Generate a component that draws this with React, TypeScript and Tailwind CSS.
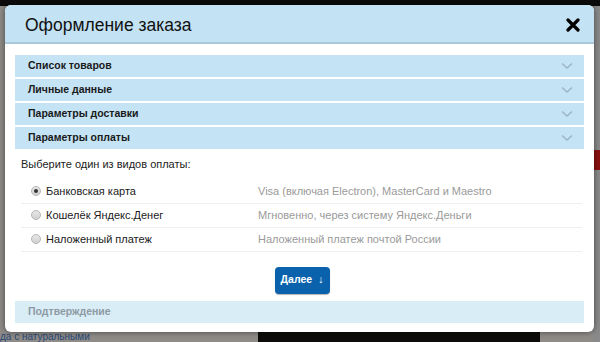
const sections = ['Список товаров', 'Личные данные', 'Параметры доставки', 'Параметры оплаты']

const payments = [
  { name: 'Банковская карта', note: 'Visa (включая Electron), MasterCard и Maestro', checked: true },
  { name: 'Кошелёк Яндекс.Денег', note: 'Мгновенно, через систему Яндекс.Деньги', checked: false },
  { name: 'Наложенный платеж', note: 'Наложенный платеж почтой России', checked: false },
]

function Radio({ checked }: { checked: boolean }) {
  return (
    <span className="w-[10px] h-[10px] rounded-full border border-[#b5b5b5] bg-gradient-to-b from-[#e8e8e8] to-[#d0d0d0] flex items-center justify-center">
      {checked && <span className="w-[4px] h-[4px] rounded-full bg-[#333]" />}
    </span>
  )
}

function Chevron() {
  return (
    <svg width="12" height="8" viewBox="0 0 12 8">
      <polyline points="1,1.5 6,6 11,1.5" fill="none" stroke="#9cb4c6" strokeWidth="1.5" />
    </svg>
  )
}

export default function App() {
  return (
    <div className="relative w-[600px] h-[342px] overflow-hidden bg-[#8f8c88] font-['Liberation_Sans',sans-serif]">
      {/* page behind the overlay */}
      <div className="absolute inset-x-0 top-0 h-[6px] bg-[#0b0b0b]" />
      <div className="absolute right-0 top-[6px] w-[7px] h-[336px] bg-[#8a8a8a]" />
      <div className="absolute right-0 top-[150px] w-[7px] h-[20px] bg-[#8b1010]" />
      <div className="absolute left-[258px] bottom-0 w-[282px] h-[10px] bg-[#0d0c0b]" />
      <div className="absolute left-0 bottom-0 text-[10px] leading-[10px] text-[#2a4a78]">да с натуральными</div>

      <div className="relative ml-[5px] mt-[5px] w-[589px] h-[327px] bg-white rounded-[6px] shadow-[0_0_6px_rgba(0,0,0,0.5)] overflow-hidden flex flex-col">
        <div className="h-[39px] bg-[#c3e2f3] border-b-2 border-[#a9c8da] flex items-center justify-between pl-[20px] pr-[14px] pt-[3px]">
          <span className="text-[17.5px] text-[#111]">Оформление заказа</span>
          <svg width="14" height="14" viewBox="0 0 14 14">
            <path d="M2 2 L12 12 M12 2 L2 12" stroke="#000" strokeWidth="3.2" strokeLinecap="round" />
          </svg>
        </div>

        <div className="px-[10px] pt-[11px]">
          <div className="flex flex-col gap-[2px]">
            {sections.map((s) => (
              <div key={s} className="h-[22px] bg-[#c4e3f4] flex items-center justify-between pl-[13px] pr-[11px]">
                <span className="text-[10.5px] font-bold text-[#1a1a1a]">{s}</span>
                <Chevron />
              </div>
            ))}
          </div>

          <div className="pl-[6px] pt-[7px] text-[11px] text-[#222]">Выберите один из видов оплаты:</div>

          <div className="mt-[7px] ml-[6px] mr-[2px]">
            {payments.map((p) => (
              <div key={p.name} className="h-[24px] flex items-center border-b border-[#efefef] text-[11px]">
                <div className="w-[25px] flex justify-end pr-[5px]">
                  <Radio checked={p.checked} />
                </div>
                <span className="w-[212px] text-[#1a1a1a]">{p.name}</span>
                <span className="text-[#9a9a9a]">{p.note}</span>
              </div>
            ))}
          </div>

          <div className="flex justify-center mt-[15px] pl-[6px]">
            <button className="h-[27px] pl-[6px] pr-[7px] rounded-[4px] bg-[#0a62ac] text-white text-[10.5px] font-bold flex items-center gap-[6px] shadow-[0_1px_1px_rgba(0,0,0,0.3)]">
              Далее <span className="font-normal">↓</span>
            </button>
          </div>

          <div className="mt-[7px] h-[22px] bg-[#d9edf7] flex items-center pl-[13px]">
            <span className="text-[10.5px] font-bold text-[#8d9aa3]">Подтверждение</span>
          </div>
        </div>
      </div>
    </div>
  )
}
